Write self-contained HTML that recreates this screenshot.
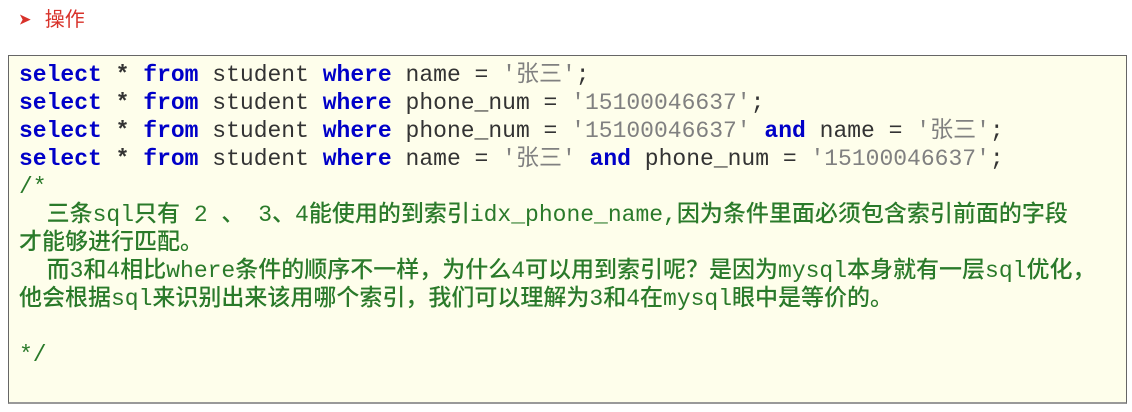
<!DOCTYPE html>
<html><head><meta charset="utf-8"><style>
body{margin:0;background:#fff;width:1132px;height:412px;overflow:hidden;position:relative;font-family:"Liberation Sans","Noto Sans CJK SC",sans-serif}
.h{position:absolute;left:19px;top:3px;color:#d8322a;font-size:20px}
.h b{font-size:14px;margin-right:14px;position:relative;top:-2px}
.box{position:absolute;left:8px;top:55px;width:1117px;height:346px;background:#fefeeb;border:1px solid #666;border-bottom:2px solid #999}
pre{margin:0;position:absolute;left:10px;top:5px;font-family:"Liberation Mono","Noto Sans CJK SC",monospace;font-size:23px;line-height:28px;color:#333}
.k{color:#0000c8;font-weight:bold}
.s{color:#808080}
.c{color:#2a7a2a;font-weight:500}
</style></head><body>
<div class="h"><b>➤</b>操作</div>
<div class="box"><pre><span class="k">select</span> <b>*</b> <span class="k">from</span> student <span class="k">where</span> name = <span class="s">'张三'</span>;
<span class="k">select</span> <b>*</b> <span class="k">from</span> student <span class="k">where</span> phone_num = <span class="s">'15100046637'</span>;
<span class="k">select</span> <b>*</b> <span class="k">from</span> student <span class="k">where</span> phone_num = <span class="s">'15100046637'</span> <span class="k">and</span> name = <span class="s">'张三'</span>;
<span class="k">select</span> <b>*</b> <span class="k">from</span> student <span class="k">where</span> name = <span class="s">'张三'</span> <span class="k">and</span> phone_num = <span class="s">'15100046637'</span>;
<span class="c">/*
  三条sql只有 2 、 3、4能使用的到索引idx_phone_name,因为条件里面必须包含索引前面的字段
才能够进行匹配。
  而3和4相比where条件的顺序不一样，为什么4可以用到索引呢？是因为mysql本身就有一层sql优化，
他会根据sql来识别出来该用哪个索引，我们可以理解为3和4在mysql眼中是等价的。

*/</span></pre></div>
</body></html>
